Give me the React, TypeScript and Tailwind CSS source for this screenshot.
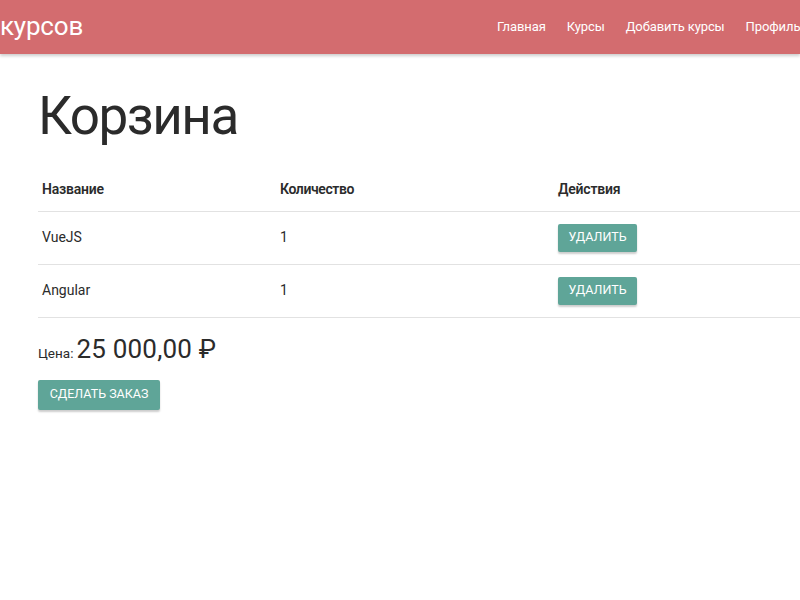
import React from "react";

const items = [
    { id: 1, title: "VueJS", count: 1 },
    { id: 2, title: "Angular", count: 1 },
];

const navLinks = ["Главная", "Курсы", "Добавить курсы", "Профиль"];

export default function App() {
    return (
        <div className="min-h-[600px] w-[800px] overflow-hidden bg-white text-[#2b2b2b] font-['Roboto',sans-serif]">
            <nav className="relative z-10 flex h-[54px] items-center whitespace-nowrap bg-[#d36c6f] text-white shadow-[0_2px_3px_rgba(0,0,0,0.2)]">
                <div className="w-[496px] flex-none text-[26px] leading-none tracking-[-0.2px] pb-[2px]">курсов</div>
                <ul className="flex flex-none gap-[19px] text-[13px] tracking-[-0.1px]">
                    {navLinks.map((link) => (
                        <li key={link} className="px-[1px]">
                            {link}
                        </li>
                    ))}
                </ul>
            </nav>

            <main className="pl-[38px]">
                <h1 className="mt-[36px] text-[53px] leading-none font-normal tracking-[-1.5px]">Корзина</h1>

                <table className="mt-[15px] w-[762px] border-collapse text-[14px]">
                    <thead>
                        <tr className="h-[53px] border-b border-[#e2e2e2] text-left">
                            <th className="w-[237px] px-[4px] pt-[11px] font-semibold tracking-[-0.2px]">Название</th>
                            <th className="w-[278px] px-[5px] pt-[11px] font-semibold tracking-[-0.4px]">Количество</th>
                            <th className="px-[5px] pt-[11px] font-semibold tracking-[-0.2px]">Действия</th>
                        </tr>
                    </thead>
                    <tbody>
                        {items.map((item) => (
                            <tr key={item.id} className="h-[53px] border-b border-[#e2e2e2]">
                                <td className="px-[4px]">{item.title}</td>
                                <td className="px-[5px]">{item.count}</td>
                                <td className="px-[5px]">
                                    <button
                                        type="button"
                                        className="h-[28px] w-[79px] rounded-[2px] bg-[#5fa598] text-[12.5px] uppercase text-white shadow-[0_2px_2px_rgba(0,0,0,0.2)]"
                                    >
                                        Удалить
                                    </button>
                                </td>
                            </tr>
                        ))}
                    </tbody>
                </table>

                <p className="mt-[15px] flex items-baseline gap-[3px]">
                    <span className="text-[13.5px]">Цена:</span>
                    <span className="text-[26px] leading-[32px] tracking-[0.2px]">25 000,00 ₽</span>
                </p>

                <button
                    type="button"
                    className="mt-[15px] h-[30px] w-[122px] rounded-[2px] bg-[#5fa598] text-[12.5px] uppercase text-white shadow-[0_2px_2px_rgba(0,0,0,0.2)]"
                >
                    Сделать заказ
                </button>
            </main>
        </div>
    );
}
